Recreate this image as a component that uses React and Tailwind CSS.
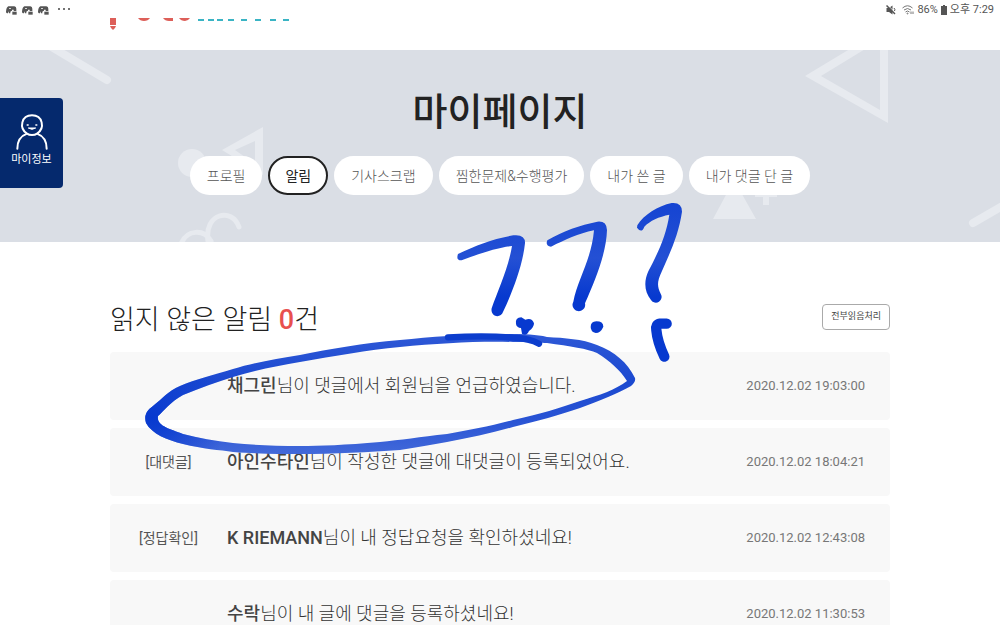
const tabs = [
  { id: "profile", label: "프로필" },
  { id: "alarm", label: "알림" },
  { id: "scrap", label: "기사스크랩" },
  { id: "saved", label: "찜한문제&수행평가" },
  { id: "posts", label: "내가 쓴 글" },
  { id: "comments", label: "내가 댓글 단 글" },
];

const notifications = [
  { id: 1, tag: "", name: "채그린", text: "님이 댓글에서 회원님을 언급하였습니다.", date: "2020.12.02 19:03:00" },
  { id: 2, tag: "[대댓글]", name: "아인수타인", text: "님이 작성한 댓글에 대댓글이 등록되었어요.", date: "2020.12.02 18:04:21" },
  { id: 3, tag: "[정답확인]", name: "K RIEMANN", text: "님이 내 정답요청을 확인하셨네요!", date: "2020.12.02 12:43:08" },
  { id: 4, tag: "", name: "수락", text: "님이 내 글에 댓글을 등록하셨네요!", date: "2020.12.02 11:30:53" },
];

function GameIcon() {
  return (
    <svg width="11" height="9" viewBox="0 0 33 27" fill="#555" aria-hidden="true">
      <path d="M7 1h18q6 1 6 7v7h-8v-4h-5v3q-5 0-5 5v3H9v-5H7v3q-1 2-4 2-3-1-3-5Q1 4 7 1z" />
      <path d="M9 6h6v2H9z" fill="#fff" />
      <path d="M19 17h13v9H19z" />
    </svg>
  );
}

function StatusBar() {
  return (
    <div className="flex h-[18px] items-center justify-between px-1.5 pt-0.5 text-[11px] leading-4 text-[#555]">
      <div className="flex items-center gap-[5px]">
        <GameIcon />
        <GameIcon />
        <GameIcon />
        <svg className="ml-1" width="12" height="4" viewBox="0 0 12 4" fill="#444" aria-hidden="true">
          <circle cx="1" cy="1" r="1" />
          <circle cx="6" cy="1" r="1" />
          <circle cx="11" cy="1" r="1" />
        </svg>
      </div>
      <div className="flex items-center gap-[3px]">
        <svg className="mr-[3px]" width="10" height="10" viewBox="0 0 20 20" fill="#555" aria-hidden="true">
          <path d="M1 6h5l7-5v18l-7-5H1z" />
          <path d="M4 1l15 15" stroke="#fff" strokeWidth="2" />
          <path d="M1 1l17 17" fill="none" stroke="#555" strokeWidth="3" />
          <path d="M16 6q3 3 1 6" fill="none" stroke="#555" strokeWidth="2" />
        </svg>
        <svg width="12" height="10" viewBox="0 0 24 20" fill="none" stroke="#777" strokeWidth="2" aria-hidden="true">
          <path d="M1 6q10-9 20 0M4 10q7-6 14 0M7 14q4-4 8 0" />
          <circle cx="11" cy="17" r="1" />
          <path d="M18 13v5M22 13v5" />
        </svg>
        <span>86%</span>
        <svg width="6" height="10" viewBox="0 0 12 20" fill="#555" aria-hidden="true">
          <path d="M4 0h4v2h4v18H0V2h4z" />
        </svg>
        <span>오후 7:29</span>
      </div>
    </div>
  );
}

function Logo() {
  return (
    <a href="#" aria-label="홈" className="block h-8">
      <svg width="182" height="12" viewBox="0 0 182 12" aria-hidden="true">
        <g fill="#dd5f59">
          <path d="M0 0h6v7H0zM0 8h6l-1 2-2 2-2-2z" />
          <path d="M28 0h12q-2 3-6 3t-6-3zM53 0h10v3h-4q-4 0-6-3zM69 0h11q-2 3-5 3-4 0-6-3z" />
        </g>
        <g fill="#3ab4c4">
          {[88, 98, 107, 118, 131, 145, 160, 173].map((x) => (
            <rect key={x} x={x} y="1" width="6" height="2" />
          ))}
        </g>
      </svg>
    </a>
  );
}

function BannerShapes() {
  return (
    <svg
      className="absolute top-0 left-1/2 -translate-x-1/2"
      width="1000"
      height="192"
      viewBox="0 50 1000 192"
      fill="#e7eaef"
      aria-hidden="true"
    >
      <path d="M50 46L107 80M973 223l40-23" stroke="#e7eaef" strokeWidth="8" strokeLinecap="round" />
      <path fillRule="evenodd" d="M805 76L888 26v97zM821 76l59 34V40z" />
      <path fillRule="evenodd" d="M222 150l41-23v48zM235 150l20 14v-23z" />
      <circle cx="192" cy="163" r="14" />
      <path d="M734 180l22 39h-43zM755 190h22v7h-8v8h-6v-8h-8z" />
      <path
        d="M208 241c-4-28 24-34 31-14M181 244c6-15 23-15 30-3"
        fill="none"
        stroke="#e7eaef"
        strokeWidth="5"
        strokeLinecap="round"
      />
    </svg>
  );
}

function PenMarks() {
  return (
    <svg
      className="pointer-events-none absolute top-0 left-1/2 -translate-x-1/2"
      width="1000"
      height="625"
      viewBox="0 0 1000 625"
      aria-hidden="true"
    >
      <defs>
        <linearGradient id="loop" gradientUnits="userSpaceOnUse" x1="0" y1="335" x2="0" y2="453">
          <stop offset="0" stopColor="#2e58d6" />
          <stop offset="0.4" stopColor="#1b49d0" />
          <stop offset="0.7" stopColor="#2853d4" />
          <stop offset="1" stopColor="#4168d9" />
        </linearGradient>
        <radialGradient id="loopEnd" gradientUnits="userSpaceOnUse" cx="152" cy="417" r="75">
          <stop offset="0" stopColor="#0739cf" />
          <stop offset="1" stopColor="#0739cf" stopOpacity="0" />
        </radialGradient>
        <linearGradient id="hook" gradientUnits="userSpaceOnUse" x1="0" y1="40" x2="0" y2="370">
          <stop offset="0" stopColor="#1544d2" />
          <stop offset="0.5" stopColor="#2450d4" />
          <stop offset="0.85" stopColor="#0739cf" />
        </linearGradient>
      </defs>
      {["url(#loop)", "url(#loopEnd)"].map((fill) => (
        <path
          key={fill}
          fill={fill}
          fillRule="evenodd"
          d="M400 340C363 343 330 349 300 355C275 359 252 363 233 369C213 375 196 379 180 386C168 391 162 399 153 406C146 411 144 416 146 423C152 434 167 440 183 444C203 449 220 450 233 452C260 454 280 454 300 454C335 454 369 452 400 450C417 447 432 445 447 442C470 438 492 433 513 427C537 421 560 415 580 408C600 401 618 393 631 386Q636 382 635 378C627 362 615 352 597 345C582 339 565 338 547 337C535 334 520 334 500 334C465 334 430 337 400 340ZM400 347C440 343 480 341 513 342C530 342 542 343 547 343C570 346 588 349 597 353C610 361 620 370 627 381C615 390 600 395 580 401C560 408 540 414 513 420C490 426 470 430 447 434C420 437 400 440 380 442C345 445 320 446 300 446C275 446 253 445 233 443C215 441 198 438 183 434C170 429 156 426 158 416C164 411 170 402 183 395C200 388 217 382 233 377C255 370 278 366 300 362C335 356 367 350 400 347Z"
        />
      ))}
      <g transform="translate(430 190) scale(.33333)" fill="url(#hook)">
        <path d="M84 192C140 165 190 146 250 136Q286 132 285 160C278 225 250 300 220 364C212 388 180 380 185 355C204 300 235 235 246 168C205 172 150 190 95 211Q77 212 84 192Z" />
        <path d="M352 151C400 122 450 106 502 95Q530 92 531 120C529 190 496 270 465 340A19 19 0 1 1 430 335C442 270 484 210 492 121C445 130 405 150 363 170Q345 168 352 151Z" />
        <path d="M622 106C640 75 685 47 725 39Q756 36 756 65C746 135 718 193 695 245C680 277 682 291 692 311A17 17 0 1 1 663 330C643 305 641 275 655 244C683 190 708 139 718 74C687 80 660 92 643 110Q635 132 621 113Z" />
        <g fill="#0739cf">
          <path d="M258 402Q255 382 274 382L286 389Q306 382 312 400Q312 413 297 423Q290 440 276 431L273 414Q260 413 258 402Z" />
          <path d="M482 411Q482 395 499 394Q520 394 520 410Q512 429 497 429Q483 427 482 411Z" />
        </g>
        <path
          d="M710 401H690Q676 403 679 420Q682 455 703 500"
          fill="none"
          stroke="#0739cf"
          strokeWidth="31"
          strokeLinecap="round"
          strokeLinejoin="round"
        />
        <path
          d="M54 442Q170 436 250 443Q300 446 327 461"
          fill="none"
          stroke="#0c3dcd"
          strokeWidth="19"
          strokeLinecap="round"
        />
      </g>
    </svg>
  );
}

function NotificationRow({ item }) {
  return (
    <li className="flex h-[68px] items-center rounded-sm bg-[#f8f8f8] pr-[25px]">
      <span className="w-[117px] shrink-0 text-center text-sm text-[#555]">{item.tag}</span>
      <p className="min-w-0 flex-1 truncate text-lg font-light text-[#333]">
        <strong className="font-medium text-[#444]">{item.name}</strong>
        {item.text}
      </p>
      <time className="shrink-0 font-['Roboto'] text-[13px] text-[#777]">{item.date}</time>
    </li>
  );
}

export default function App() {
  return (
    <div className="relative h-screen overflow-hidden bg-white font-['Roboto','Noto_Sans_CJK_KR',sans-serif]">
      <StatusBar />
      <header className="mx-auto max-w-[780px]">
        <Logo />
      </header>

      <section className="relative flex h-48 flex-col items-center overflow-hidden bg-[#dadee5] pt-[34px]">
        <BannerShapes />
        <h1 className="relative text-[38px] leading-[56px] font-medium text-[#222]">마이페이지</h1>
        <nav className="relative mt-4 flex gap-1.5">
          {tabs.map((tab) => (
            <a
              key={tab.id}
              href={`#${tab.id}`}
              className={
                tab.id === "alarm"
                  ? "flex h-[39px] items-center rounded-full border-2 border-[#222] bg-white px-[15px] text-sm whitespace-nowrap text-[#222]"
                  : "flex h-[39px] items-center rounded-full bg-white px-[17px] text-sm font-light whitespace-nowrap text-[#555]"
              }
            >
              {tab.label}
            </a>
          ))}
        </nav>
      </section>

      <main className="mx-auto max-w-[780px] pt-[58px]">
        <div className="flex items-start justify-between">
          <h2 className="text-[27px] leading-10 font-light text-[#222]">
            읽지 않은 알림 <span className="font-medium text-[#e8504f]">0</span>건
          </h2>
          <button
            type="button"
            className="mt-1 h-[26px] rounded-sm border border-[#aaa] bg-white px-2 text-[9px] text-[#444]"
          >
            전부읽음처리
          </button>
        </div>
        <ul className="mt-3 flex flex-col gap-2">
          {notifications.map((item) => (
            <NotificationRow key={item.id} item={item} />
          ))}
        </ul>
      </main>

      <button
        type="button"
        className="absolute top-[98px] left-0 flex h-[90px] w-[63px] flex-col items-center rounded-r-sm bg-[#05296d] pt-4 text-[11px] leading-4 text-white"
      >
        <svg width="32" height="36" viewBox="0 0 96 108" fill="none" stroke="#fff" strokeWidth="6" aria-hidden="true">
          <path
            strokeLinecap="round"
            d="M4 104C4 82 14 66 33 59C8 42 16 4 48 4S88 42 63 59C82 66 92 82 92 104M33 59Q39 63 48 63T63 59"
          />
          <path strokeWidth="3" d="M37 42Q48 50 59 42z" fill="#fff" />
          <path d="M32 33h6M58 33h6" strokeWidth="5" />
        </svg>
        <span className="mt-0.5">마이정보</span>
      </button>

      <PenMarks />
    </div>
  );
}
